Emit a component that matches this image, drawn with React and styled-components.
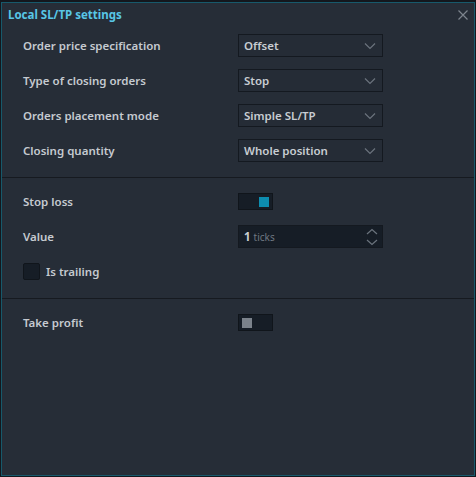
import styled, { createGlobalStyle } from "styled-components";

const GlobalStyle = createGlobalStyle`
  html, body {
    margin: 0;
    padding: 0;
    background: #13171d;
    font-family: "Noto Sans", "Open Sans", sans-serif;
  }
`;

const Screen = styled.div`
  width: 476px;
  height: 477px;
  box-sizing: border-box;
  padding: 2px 1px 1px 1px;
  overflow: hidden;
`;

const Dialog = styled.div`
  height: 100%;
  box-sizing: border-box;
  background: #262d37;
  border: 1px solid #17596b;
  display: flex;
  flex-direction: column;
`;

const TitleBar = styled.div`
  display: flex;
  align-items: center;
  justify-content: space-between;
  height: 23px;
  padding: 0 6px 0 6px;
`;

const Title = styled.div`
  color: #58c6e6;
  font-size: 11.5px;
  font-weight: 700;
`;

const Close = styled.div`
  width: 10px;
  height: 10px;
  display: flex;
`;

const Section = styled.div`
  display: flex;
  flex-direction: column;
  gap: 12px;
  padding: ${(p) => p.pad || "8px 0 15px 21px"};
  border-bottom: ${(p) => (p.last ? "none" : "1px solid #161a20")};
`;

const Row = styled.div`
  display: grid;
  grid-template-columns: 215px 145px;
  align-items: center;
  height: 23px;
`;

const Label = styled.span`
  color: #c5cad0;
  font-size: 11.5px;
  font-weight: 600;
`;

const Select = styled.div`
  height: 23px;
  box-sizing: border-box;
  border: 1px solid #141920;
  background: #252c36;
  display: flex;
  align-items: center;
  justify-content: space-between;
  padding: 0 6px 0 5px;
  color: #c8cdd2;
  font-size: 11.5px;
  font-weight: 600;
`;

const NumberBox = styled(Select)`
  background: #161d26;
  padding-right: 4px;
`;

const Num = styled.span`
  color: #c8cdd2;
  font-weight: 700;
`;

const Unit = styled.span`
  color: #6f7781;
  font-size: 10px;
  font-weight: 400;
  margin-left: 3px;
`;

const Toggle = styled.div`
  width: 35px;
  height: 17px;
  box-sizing: border-box;
  border: 1px solid #10151b;
  background: #161d26;
  display: flex;
  align-items: center;
  justify-content: ${(p) => (p.$on ? "flex-end" : "flex-start")};
  padding: 0 3px;
`;

const Knob = styled.div`
  width: 10px;
  height: 10px;
  background: ${(p) => (p.$on ? "#0d8db0" : "#7b828b")};
`;

const CheckRow = styled.label`
  display: flex;
  align-items: center;
  gap: 6px;
  height: 23px;
`;

const Box = styled.div`
  width: 17px;
  height: 17px;
  box-sizing: border-box;
  border: 1px solid #10151b;
  background: #161d26;
  border-radius: 2px;
`;

const Chevron = () => (
  <svg width="12" height="8" viewBox="0 0 12 8">
    <path d="M1 1.5 L6 6.5 L11 1.5" fill="none" stroke="#6b737d" strokeWidth="1.2" />
  </svg>
);

const Spinner = () => (
  <svg width="12" height="18" viewBox="0 0 12 18">
    <path d="M1 6 L6 1.5 L11 6" fill="none" stroke="#6b737d" strokeWidth="1.2" />
    <path d="M1 12 L6 16.5 L11 12" fill="none" stroke="#6b737d" strokeWidth="1.2" />
  </svg>
);

const selects = [
  ["Order price specification", "Offset"],
  ["Type of closing orders", "Stop"],
  ["Orders placement mode", "Simple SL/TP"],
  ["Closing quantity", "Whole position"],
];

export default function App() {
  return (
    <>
      <GlobalStyle />
      <Screen>
        <Dialog>
          <TitleBar>
            <Title>Local SL/TP settings</Title>
            <Close>
              <svg width="10" height="10" viewBox="0 0 10 10">
                <path d="M0.5 0.5 L9.5 9.5 M9.5 0.5 L0.5 9.5" stroke="#7d848d" strokeWidth="1.2" />
              </svg>
            </Close>
          </TitleBar>
          <Section pad="8px 0 15px 21px">
            {selects.map(([label, value]) => (
              <Row key={label}>
                <Label>{label}</Label>
                <Select>
                  {value}
                  <Chevron />
                </Select>
              </Row>
            ))}
          </Section>
          <Section pad="12px 0 15px 21px">
            <Row>
              <Label>Stop loss</Label>
              <Toggle $on>
                <Knob $on />
              </Toggle>
            </Row>
            <Row>
              <Label>Value</Label>
              <NumberBox>
                <span>
                  <Num>1</Num>
                  <Unit>ticks</Unit>
                </span>
                <Spinner />
              </NumberBox>
            </Row>
            <CheckRow>
              <Box />
              <Label>Is trailing</Label>
            </CheckRow>
          </Section>
          <Section last pad="12px 0 12px 21px">
            <Row>
              <Label>Take profit</Label>
              <Toggle>
                <Knob />
              </Toggle>
            </Row>
          </Section>
        </Dialog>
      </Screen>
    </>
  );
}
